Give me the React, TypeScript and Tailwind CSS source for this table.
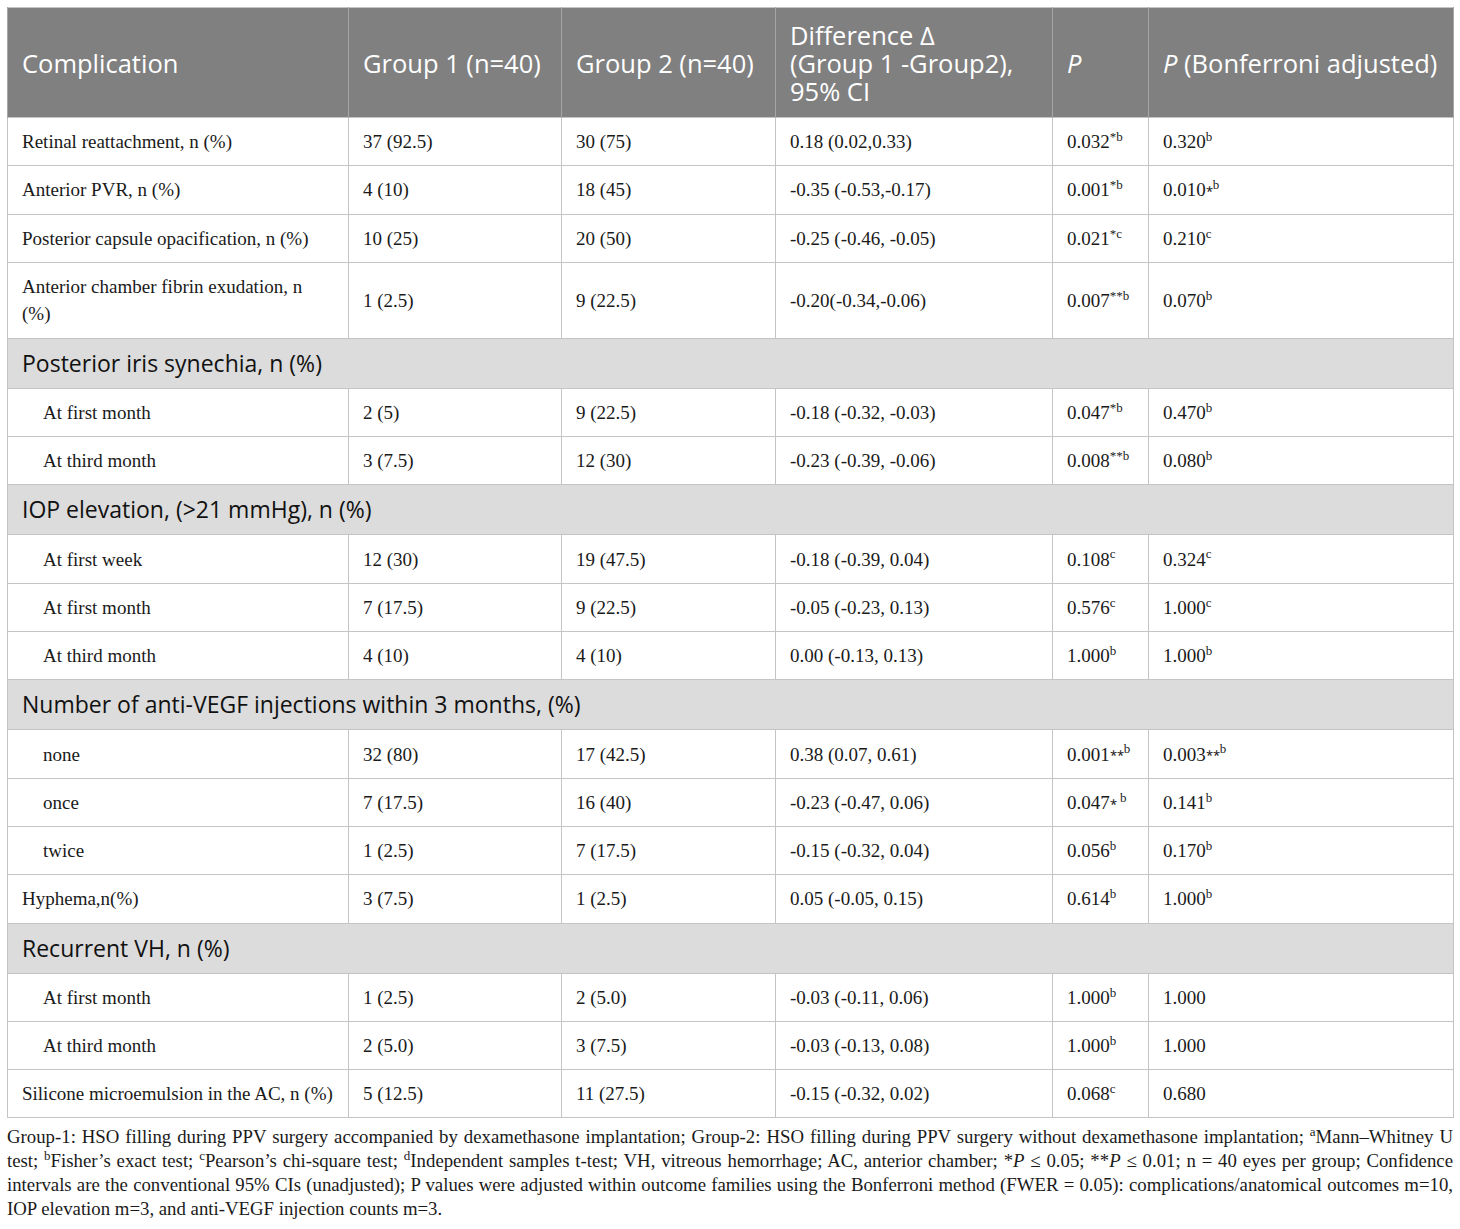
import React from "react";

const serif = { fontFamily: '"Liberation Serif", "Times New Roman", serif' };

type Row =
  | { kind: "section"; label: string }
  | { kind: "row"; label: React.ReactNode; sub?: boolean; tall?: boolean; cells: React.ReactNode[] };

const S = ({ children }: { children: React.ReactNode }) => (
  <sup className="text-[13px] top-[-0.55em]">{children}</sup>
);

const rows: Row[] = [
  { kind: "row", label: "Retinal reattachment, n (%)", cells: ["37 (92.5)", "30 (75)", "0.18 (0.02,0.33)", <>0.032<S>*b</S></>, <>0.320<S>b</S></>] },
  { kind: "row", label: "Anterior PVR, n (%)", cells: ["4 (10)", "18 (45)", "-0.35 (-0.53,-0.17)", <>0.001<S>*b</S></>, <>0.010<S>⁎b</S></>] },
  { kind: "row", label: "Posterior capsule opacification, n (%)", cells: ["10 (25)", "20 (50)", "-0.25 (-0.46, -0.05)", <>0.021<S>*c</S></>, <>0.210<S>c</S></>] },
  { kind: "row", tall: true, label: <>Anterior chamber fibrin exudation, n<br />(%)</>, cells: ["1 (2.5)", "9 (22.5)", "-0.20(-0.34,-0.06)", <>0.007<S>**b</S></>, <>0.070<S>b</S></>] },
  { kind: "section", label: "Posterior iris synechia, n (%)" },
  { kind: "row", sub: true, label: "At first month", cells: ["2 (5)", "9 (22.5)", "-0.18 (-0.32, -0.03)", <>0.047<S>*b</S></>, <>0.470<S>b</S></>] },
  { kind: "row", sub: true, label: "At third month", cells: ["3 (7.5)", "12 (30)", "-0.23 (-0.39, -0.06)", <>0.008<S>**b</S></>, <>0.080<S>b</S></>] },
  { kind: "section", label: "IOP elevation, (>21 mmHg), n (%)" },
  { kind: "row", sub: true, label: "At first week", cells: ["12 (30)", "19 (47.5)", "-0.18 (-0.39, 0.04)", <>0.108<S>c</S></>, <>0.324<S>c</S></>] },
  { kind: "row", sub: true, label: "At first month", cells: ["7 (17.5)", "9 (22.5)", "-0.05 (-0.23, 0.13)", <>0.576<S>c</S></>, <>1.000<S>c</S></>] },
  { kind: "row", sub: true, label: "At third month", cells: ["4 (10)", "4 (10)", "0.00 (-0.13, 0.13)", <>1.000<S>b</S></>, <>1.000<S>b</S></>] },
  { kind: "section", label: "Number of anti-VEGF injections within 3 months, (%)" },
  { kind: "row", sub: true, label: "none", cells: ["32 (80)", "17 (42.5)", "0.38 (0.07, 0.61)", <>0.001<S>⁎⁎b</S></>, <>0.003<S>⁎⁎b</S></>] },
  { kind: "row", sub: true, label: "once", cells: ["7 (17.5)", "16 (40)", "-0.23 (-0.47, 0.06)", <>0.047<S>⁎ b</S></>, <>0.141<S>b</S></>] },
  { kind: "row", sub: true, label: "twice", cells: ["1 (2.5)", "7 (17.5)", "-0.15 (-0.32, 0.04)", <>0.056<S>b</S></>, <>0.170<S>b</S></>] },
  { kind: "row", label: "Hyphema,n(%)", cells: ["3 (7.5)", "1 (2.5)", "0.05 (-0.05, 0.15)", <>0.614<S>b</S></>, <>1.000<S>b</S></>] },
  { kind: "section", label: "Recurrent VH, n (%)" },
  { kind: "row", sub: true, label: "At first month", cells: ["1 (2.5)", "2 (5.0)", "-0.03 (-0.11, 0.06)", <>1.000<S>b</S></>, "1.000"] },
  { kind: "row", sub: true, label: "At third month", cells: ["2 (5.0)", "3 (7.5)", "-0.03 (-0.13, 0.08)", <>1.000<S>b</S></>, "1.000"] },
  { kind: "row", label: "Silicone microemulsion in the AC, n (%)", cells: ["5 (12.5)", "11 (27.5)", "-0.15 (-0.32, 0.02)", <>0.068<S>c</S></>, "0.680"] },
];

const footLines: React.ReactNode[] = [
  <>Group-1: HSO filling during PPV surgery accompanied by dexamethasone implantation; Group-2: HSO filling during PPV surgery without dexamethasone implantation; <S>a</S>Mann–Whitney U</>,
  <>test; <S>b</S>Fisher’s exact test; <S>c</S>Pearson’s chi-square test; <S>d</S>Independent samples t-test; VH, vitreous hemorrhage; AC, anterior chamber; *<i>P</i> ≤ 0.05; **<i>P</i> ≤ 0.01; n = 40 eyes per group; Confidence</>,
  <>intervals are the conventional 95% CIs (unadjusted); P values were adjusted within outcome families using the Bonferroni method (FWER = 0.05): complications/anatomical outcomes m=10,</>,
];

export default function App() {
  const sans = { fontFamily: '"Open Sans", "Noto Sans", sans-serif' };
  return (
    <div className="w-[1460px] h-[1229px] bg-white pt-[7px] px-[7px]">
      <table className="w-[1446px] table-fixed border-collapse border border-[#c4c4c4]">
        <colgroup>
          <col className="w-[341px]" />
          <col className="w-[213px]" />
          <col className="w-[214px]" />
          <col className="w-[277px]" />
          <col className="w-[96px]" />
          <col className="w-[305px]" />
        </colgroup>
        <thead>
          <tr className="h-[110px] bg-[#808080] text-white text-[25.5px] leading-[28px]" style={sans}>
            <th className="text-left font-normal px-[14px] border-x border-[#a6a6a6]">Complication</th>
            <th className="text-left font-normal px-[14px] border-x border-[#a6a6a6] whitespace-nowrap">Group 1 (n=40)</th>
            <th className="text-left font-normal px-[14px] border-x border-[#a6a6a6] whitespace-nowrap">Group 2 (n=40)</th>
            <th className="text-left font-normal px-[14px] border-x border-[#a6a6a6] whitespace-nowrap">
              Difference Δ<br />(Group 1 -Group2),<br />95% CI
            </th>
            <th className="text-left font-normal px-[14px] border-x border-[#a6a6a6]"><i>P</i></th>
            <th className="text-left font-normal px-[14px] border-x border-[#a6a6a6] whitespace-nowrap"><i>P</i> (Bonferroni adjusted)</th>
          </tr>
        </thead>
        <tbody className="text-[19px] leading-[27px] text-[#1a1a1a]" style={serif}>
          {rows.map((r, i) =>
            r.kind === "section" ? (
              <tr key={i} className="h-[50px] bg-[#dcdcdc] border-y border-[#c4c4c4]">
                <td colSpan={6} className="px-[14px] text-[23px] text-[#111]" style={sans}>{r.label}</td>
              </tr>
            ) : (
              <tr key={i} className={`${r.tall ? "h-[76px]" : "h-[48.3px]"} border-y border-[#c4c4c4]`}>
                <td className={`border-x border-[#c4c4c4] pr-[14px] ${r.sub ? "pl-[35px]" : "pl-[14px]"}`}>{r.label}</td>
                {r.cells.map((c, j) => (
                  <td key={j} className="border-x border-[#c4c4c4] px-[14px] whitespace-nowrap">{c}</td>
                ))}
              </tr>
            )
          )}
        </tbody>
      </table>
      <div className="mt-[7px] text-[18.8px] leading-[24px] text-[#1a1a1a] w-[1446px]" style={serif}>
        {footLines.map((l, i) => (
          <div key={i} className="text-justify [text-align-last:justify] whitespace-nowrap">{l}</div>
        ))}
        <div>IOP elevation m=3, and anti-VEGF injection counts m=3.</div>
      </div>
    </div>
  );
}
